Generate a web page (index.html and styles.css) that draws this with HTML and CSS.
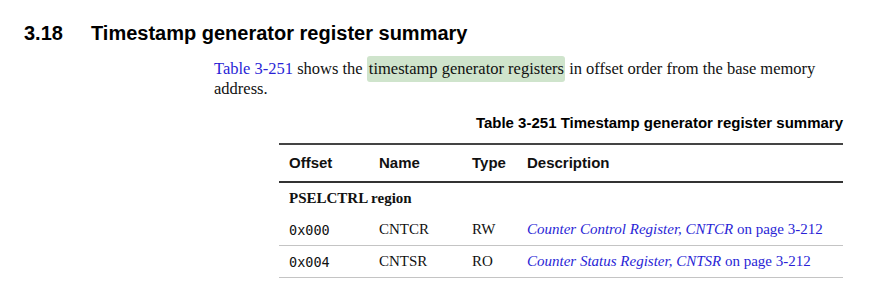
FILE: index.html
```html
<!DOCTYPE html>
<html>
<head>
<meta charset="utf-8">
<link rel="stylesheet" href="styles.css">
</head>
<body>
<div class="page">
  <h2 class="heading"><span class="num">3.18</span><span>Timestamp generator register summary</span></h2>
  <p class="intro"><a class="xref">Table 3-251</a> shows the <span class="hl">timestamp generator registers</span> in offset order from the base memory address.</p>
  <div class="tablewrap">
    <div class="caption">Table 3-251 Timestamp generator register summary</div>
    <table class="regs">
      <thead>
        <tr><th class="c-off">Offset</th><th class="c-name">Name</th><th class="c-type">Type</th><th>Description</th></tr>
      </thead>
      <tbody>
        <tr class="region"><td colspan="4">PSELCTRL region</td></tr>
        <tr class="row"><td class="mono">0x000</td><td>CNTCR</td><td>RW</td><td><a class="xref"><i>Counter Control Register, CNTCR</i> on page 3-212</a></td></tr>
        <tr class="row"><td class="mono">0x004</td><td>CNTSR</td><td>RO</td><td><a class="xref"><i>Counter Status Register, CNTSR</i> on page 3-212</a></td></tr>
      </tbody>
    </table>
  </div>
</div>
</body>
</html>
```
FILE: styles.css
```css
html, body { margin: 0; padding: 0; background: #fff; }
.page { padding: 0; }
.heading {
  margin: 0;
  padding: 20px 0 0 24px;
  font-family: "Liberation Sans", Arial, sans-serif;
  font-weight: bold;
  font-size: 20px;
  line-height: 26px;
  color: #000;
  display: flex;
}
.heading .num { width: 67px; }
.intro {
  margin: 13px 0 0 214px;
  width: 620px;
  font-family: "Liberation Serif", "Times New Roman", serif;
  font-size: 16.5px;
  line-height: 20px;
  color: #111;
}
.xref { color: #2a1fd6; text-decoration: none; }
.hl { background: #cfe4cc; border-radius: 3px; padding: 3px 1px 4px 2px; }
.tablewrap { margin: 15px 0 0 279px; width: 564px; }
.caption {
  text-align: right;
  font-family: "Liberation Sans", Arial, sans-serif;
  font-weight: bold;
  font-size: 15px;
  line-height: 18px;
  color: #000;
}
.regs {
  margin-top: 11px;
  width: 100%;
  border-collapse: collapse;
  font-family: "Liberation Serif", "Times New Roman", serif;
  font-size: 15px;
  color: #111;
}
.regs thead tr { border-top: 2px solid #444; border-bottom: 2px solid #333; }
.regs th {
  font-family: "Liberation Sans", Arial, sans-serif;
  font-size: 15px;
  font-weight: bold;
  text-align: left;
  padding: 9px 0 9px 10px;
  line-height: 18px;
}
.c-off { width: 80px; }
.c-name { width: 83px; }
.c-type { width: 45px; }
.regs td { padding: 0 0 0 10px; height: 31px; }
.region td { font-weight: bold; height: 28px; padding-top: 1px; padding-bottom: 2px; }
.row { border-bottom: 1px solid #c4c4c4; }
.mono { font-family: "DejaVu Sans Mono", monospace; font-size: 13.5px; }
```
